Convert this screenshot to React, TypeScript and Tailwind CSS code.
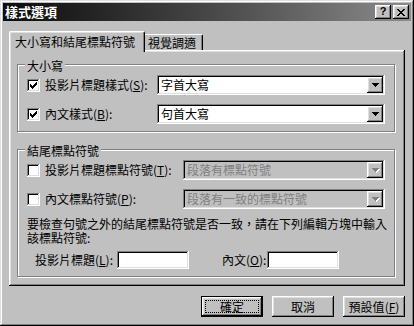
import React from "react";

// classic 3D bevels
const raised =
  "shadow-[inset_-1px_-1px_#000,inset_1px_1px_#fff,inset_-2px_-2px_#808080,inset_2px_2px_#dfdfdf]";
const sunken =
  "shadow-[inset_-1px_-1px_#fff,inset_1px_1px_#808080,inset_-2px_-2px_#dfdfdf,inset_2px_2px_#000]";

const CheckMark = () => {
  // pixel check, 7x7, each column 3px tall
  const cols = [2, 3, 4, 3, 2, 1, 0];
  return (
    <svg width="13" height="13" viewBox="0 0 13 13" shapeRendering="crispEdges">
      {cols.map((y, i) => (
        <rect key={i} x={3 + i} y={3 + y} width="1" height="3" fill="#000" />
      ))}
    </svg>
  );
};

const CheckBox = ({ checked }: { checked: boolean }) => (
  <div className={`w-[13px] h-[13px] shrink-0 bg-white ${sunken}`}>
    {checked && <CheckMark />}
  </div>
);

const Arrow = ({ disabled }: { disabled?: boolean }) => (
  <svg width="8" height="5" viewBox="0 0 8 5" shapeRendering="crispEdges">
    {disabled && (
      <>
        <rect x="1" y="1" width="7" height="1" fill="#fff" />
        <rect x="2" y="2" width="5" height="1" fill="#fff" />
        <rect x="3" y="3" width="3" height="1" fill="#fff" />
        <rect x="4" y="4" width="1" height="1" fill="#fff" />
      </>
    )}
    <rect x="0" y="0" width="7" height="1" fill={disabled ? "#808080" : "#000"} />
    <rect x="1" y="1" width="5" height="1" fill={disabled ? "#808080" : "#000"} />
    <rect x="2" y="2" width="3" height="1" fill={disabled ? "#808080" : "#000"} />
    <rect x="3" y="3" width="1" height="1" fill={disabled ? "#808080" : "#000"} />
  </svg>
);

const Combo = ({
  value,
  width,
  disabled,
}: {
  value: string;
  width: string;
  disabled?: boolean;
}) => (
  <div
    className={`${width} h-[20px] p-[2px] flex items-center ${sunken} ${
      disabled ? "bg-[#c0c0c0] text-[#808080]" : "bg-white text-black"
    }`}
  >
    <span className="flex-1 pl-[2px] leading-[16px] whitespace-nowrap">{value}</span>
    <div className={`w-[16px] h-[16px] bg-[#c0c0c0] flex items-center justify-center pl-[1px] pt-[1px] ${raised}`}>
      <Arrow disabled={disabled} />
    </div>
  </div>
);

const Key = ({ k }: { k: string }) => (
  <>
    (<span className="underline underline-offset-1">{k}</span>)
  </>
);

const Row = ({
  checked,
  label,
  k,
  labelWidth,
  value,
  comboWidth,
  disabled,
  className,
}: {
  checked: boolean;
  label: string;
  k: string;
  labelWidth: string;
  value: string;
  comboWidth: string;
  disabled?: boolean;
  className: string;
}) => (
  <div className={`h-[20px] flex items-center ${className}`}>
    <CheckBox checked={checked} />
    <span className={`ml-[5px] ${labelWidth} leading-[14px] whitespace-nowrap`}>
      {label}
      <Key k={k} />:
    </span>
    <Combo value={value} width={comboWidth} disabled={disabled} />
  </div>
);

const GroupLabel = ({ text }: { text: string }) => (
  <div className="-mt-[8px] -ml-[2px] h-[14px]">
    <span className="inline-block h-[14px] leading-[14px] px-[2px] bg-[#c0c0c0]">{text}</span>
  </div>
);

const Button = ({ children, isDefault }: { children: React.ReactNode; isDefault?: boolean }) => (
  <div className={`w-[62px] h-[21px] bg-[#c0c0c0] ${isDefault ? "border border-black" : ""}`}>
    <div className={`w-full h-full flex items-center justify-center ${raised} p-[3px]`}>
      <div
        className={`w-full h-full flex items-center justify-center leading-[14px] ${
          isDefault ? "outline outline-1 outline-dotted outline-black -outline-offset-1" : ""
        }`}
      >
        {children}
      </div>
    </div>
  </div>
);

export default function App() {
  return (
    <div
      className={`w-[414px] h-[326px] bg-[#c0c0c0] p-[3px] flex flex-col text-[12px] text-black font-['Noto_Sans_CJK_TC','Noto_Sans',sans-serif] shadow-[inset_-1px_-1px_#000,inset_1px_1px_#dfdfdf,inset_-2px_-2px_#808080,inset_2px_2px_#fff]`}
    >
      {/* title bar */}
      <div className="h-[18px] flex items-center pl-[2px] pr-[2px] bg-gradient-to-r from-[#0c0c0c] to-[#8c8c8c]">
        <span className="flex-1 text-white font-bold text-[13px] leading-[16px]">樣式選項</span>
        <div className={`w-[16px] h-[14px] bg-[#c0c0c0] flex items-center justify-center ${raised}`}>
          <span className="font-['Liberation_Sans',sans-serif] font-bold text-[11px] leading-[11px] pb-[1px]">?</span>
        </div>
        <div className={`ml-[2px] w-[16px] h-[14px] bg-[#c0c0c0] flex items-center justify-center ${raised}`}>
          <svg width="8" height="7" viewBox="0 0 8 7" shapeRendering="crispEdges">
            <path
              d="M0 0h2v1H0zM6 0h2v1H6zM1 1h2v1H1zM5 1h2v1H5zM2 2h4v1H2zM3 3h2v1H3zM2 4h4v1H2zM1 5h2v1H1zM5 5h2v1H5zM0 6h2v1H0zM6 6h2v1H6z"
              fill="#000"
            />
          </svg>
        </div>
      </div>

      {/* tabs */}
      <div className="mt-[10px] ml-[6px] h-[19px] flex items-end">
        <div className="relative z-10 w-[136px] h-[21px] -mb-[2px] bg-[#c0c0c0] border-l border-t border-r border-l-white border-t-white border-r-black rounded-t-[2px] shadow-[inset_-1px_0_#808080,inset_1px_1px_#dfdfdf] pl-[5px] pt-[3px] leading-[14px] whitespace-nowrap">
          大小寫和結尾標點符號
        </div>
        <div className="w-[58px] h-[16px] bg-[#c0c0c0] border-t border-r border-t-white border-r-black rounded-tr-[2px] shadow-[inset_-1px_0_#808080] pl-[3px] pt-[1px] leading-[14px] whitespace-nowrap">
          視覺調適
        </div>
      </div>

      {/* tab panel */}
      <div className="ml-[6px] w-[396px] h-[236px] p-[2px] flex flex-col shadow-[inset_-1px_-1px_#000,inset_1px_1px_#fff,inset_-2px_-2px_#808080,inset_2px_2px_#dfdfdf]">
        <div className="ml-[6px] mt-[12px] w-[378px] border border-[#808080] shadow-[inset_1px_1px_#fff,1px_1px_#fff] pl-[9px] pb-[7px]">
          <GroupLabel text="大小寫" />
          <Row
            className="mt-[4px]"
            checked
            label="投影片標題樣式"
            k="S"
            labelWidth="w-[112px]"
            value="字首大寫"
            comboWidth="w-[228px]"
          />
          <Row
            className="mt-[9px]"
            checked
            label="內文樣式"
            k="B"
            labelWidth="w-[112px]"
            value="句首大寫"
            comboWidth="w-[228px]"
          />
        </div>

        <div className="ml-[6px] mt-[17px] w-[378px] border border-[#808080] shadow-[inset_1px_1px_#fff,1px_1px_#fff] pl-[9px] pb-[7px]">
          <GroupLabel text="結尾標點符號" />
          <Row
            className="mt-[4px]"
            checked={false}
            label="投影片標題標點符號"
            k="T"
            labelWidth="w-[138px]"
            value="段落有標點符號"
            comboWidth="w-[202px]"
            disabled
          />
          <Row
            className="mt-[9px]"
            checked={false}
            label="內文標點符號"
            k="P"
            labelWidth="w-[138px]"
            value="段落有一致的標點符號"
            comboWidth="w-[202px]"
            disabled
          />
          <div className="mt-[8px] flex flex-col whitespace-nowrap">
            <span className="h-[14px] leading-[14px]">
              要檢查句號之外的結尾標點符號是否一致，請在下列編輯方塊中輸入
            </span>
            <span className="h-[14px] leading-[14px]">該標點符號:</span>
          </div>
          <div className="mt-[6px] h-[18px] flex items-center pl-[8px]">
            <span className="w-[82px] leading-[14px] whitespace-nowrap">
              投影片標題<Key k="L" />:
            </span>
            <div className={`w-[72px] h-[18px] bg-white ${sunken}`} />
            <span className="ml-[33px] w-[45px] leading-[14px] whitespace-nowrap">
              內文<Key k="O" />:
            </span>
            <div className={`w-[72px] h-[18px] bg-white ${sunken}`} />
          </div>
        </div>
      </div>

      {/* dialog buttons */}
      <div className="mt-[10px] flex justify-end gap-[9px] pr-[6px]">
        <Button isDefault>確定</Button>
        <Button>取消</Button>
        <Button>
          預設值<Key k="F" />
        </Button>
      </div>
    </div>
  );
}
